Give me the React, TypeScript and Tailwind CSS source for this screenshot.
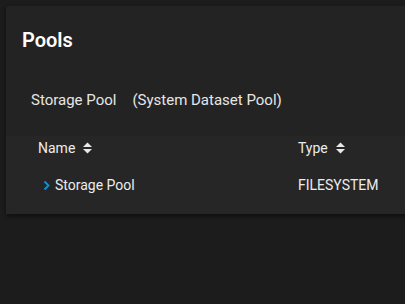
import React from "react";

function SortIcon() {
    return (
        <svg width="9" height="12" viewBox="0 0 9 12" className="ml-[8px]">
            <path d="M4.5 0.5 L9 5 L0 5 Z" fill="#e8e8e8" />
            <path d="M0 7 L9 7 L4.5 11.5 Z" fill="#e8e8e8" />
        </svg>
    );
}

export default function App() {
    return (
        <div
            className="h-[304px] w-[405px] overflow-hidden bg-[#1c1c1c] pt-[6px] pl-[6px]"
            style={{ fontFamily: "Roboto, 'Noto Sans', sans-serif" }}
        >
            <div className="w-[440px] rounded-[3px] bg-[#232323] shadow-[0_2px_4px_rgba(0,0,0,0.5)]">
                <div className="px-[16px] pt-[22px] pb-[12px]">
                    <h1 className="text-[20px] leading-[24px] font-semibold text-white">
                        Pools
                    </h1>
                </div>

                <div className="flex h-[72px] items-center px-[25px] text-[15px] text-[#e6e6e6]">
                    <span>Storage Pool</span>
                    <span className="ml-[16px]">(System Dataset Pool)</span>
                </div>

                <div className="bg-[#262626] pb-[14px]">
                    <div className="flex h-[24px] items-center text-[14px] text-[#ececec]">
                        <div className="flex w-[292px] items-center pl-[32px]">
                            Name
                            <SortIcon />
                        </div>
                        <div className="flex items-center">
                            Type
                            <SortIcon />
                        </div>
                    </div>

                    <div className="mt-[10px] flex h-[30px] items-center text-[14px] text-[#ececec]">
                        <div className="flex w-[292px] items-center pl-[37px]">
                            <svg width="7" height="11" viewBox="0 0 7 11" className="mr-[5px]">
                                <path
                                    d="M1.5 1.5 L5.5 5.5 L1.5 9.5"
                                    stroke="#1590d4"
                                    strokeWidth="1.8"
                                    fill="none"
                                />
                            </svg>
                            Storage Pool
                        </div>
                        <div>FILESYSTEM</div>
                    </div>
                </div>
            </div>
        </div>
    );
}
